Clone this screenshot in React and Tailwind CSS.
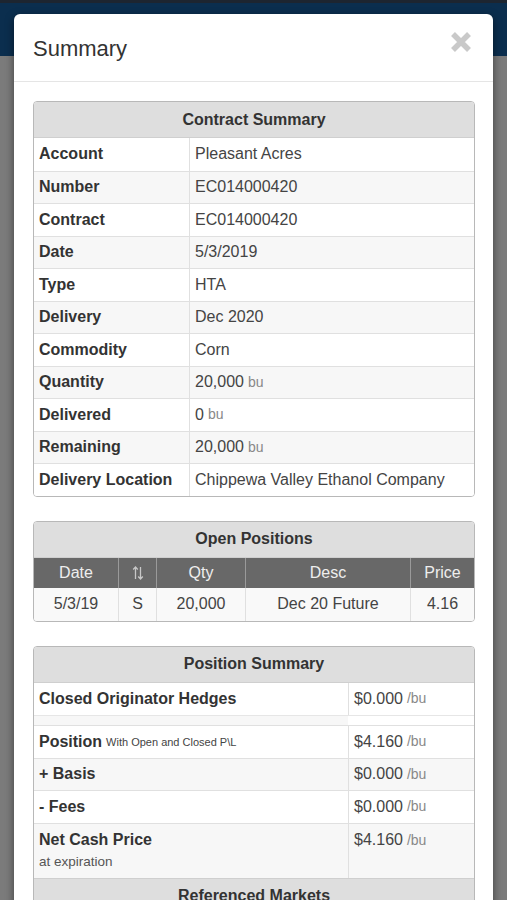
import React from "react";

const contractRows = [
  ["Account", "Pleasant Acres"],
  ["Number", "EC014000420"],
  ["Contract", "EC014000420"],
  ["Date", "5/3/2019"],
  ["Type", "HTA"],
  ["Delivery", "Dec 2020"],
  ["Commodity", "Corn"],
  ["Quantity", "20,000", "bu"],
  ["Delivered", "0", "bu"],
  ["Remaining", "20,000", "bu"],
  ["Delivery Location", "Chippewa Valley Ethanol Company"],
];

function PanelTitle({ children }) {
  return (
    <div className="h-[36px] flex items-center justify-center bg-[#dedede] border-b border-[#cfcfcf] text-[16px] font-bold text-[#333]">
      {children}
    </div>
  );
}

function Unit({ children }) {
  return <span className="text-[14px] text-[#888] ml-[4px]">{children}</span>;
}

function CloseIcon() {
  return (
    <svg width="22" height="22" viewBox="0 0 22 22">
      <path d="M3 3 L19 19 M19 3 L3 19" stroke="#c9c9c9" strokeWidth="5.5" strokeLinecap="butt" />
    </svg>
  );
}

function SortIcon() {
  return (
    <svg width="12" height="16" viewBox="0 0 12 16">
      <path d="M3.5 14 V2 M1.2 4.5 L3.5 2 L5.8 4.5" stroke="#c8c8c8" strokeWidth="1.3" fill="none" />
      <path d="M8.5 2 V14 M6.2 11.5 L8.5 14 L10.8 11.5" stroke="#c8c8c8" strokeWidth="1.3" fill="none" />
    </svg>
  );
}

export default function App() {
  return (
    <div className="relative w-[507px] h-[900px] overflow-hidden bg-[#7b7b7b] font-['Liberation_Sans',Arial,sans-serif] text-[#333]">
      <div className="h-[56px] bg-[#0b2e4e] border-t-[3px] border-[#1d2530]" />

      <div className="absolute left-[14px] top-[14px] w-[479px] h-[920px] bg-white rounded-[6px] shadow-[0_3px_9px_rgba(0,0,0,0.5)]">
        {/* header */}
        <div className="h-[68px] flex items-center justify-between pl-[19px] pr-[21px] border-b border-[#e5e5e5]">
          <div className="text-[22px] text-[#333] pt-[2px]">Summary</div>
          <div className="-mt-[12px]">
            <CloseIcon />
          </div>
        </div>

        <div className="pt-[19px] pl-[19px] pr-[18px] flex flex-col gap-[24px]">
          {/* Contract Summary */}
          <div className="border border-[#b8b8b8] rounded-[4px] overflow-hidden">
            <PanelTitle>Contract Summary</PanelTitle>
            {contractRows.map(([label, value, unit], i) => (
              <div
                key={label}
                className={`flex h-[32.5px] text-[16px] ${i > 0 ? "border-t border-[#e0e0e0]" : ""} ${i % 2 === 1 ? "bg-[#f7f7f7]" : "bg-white"}`}
              >
                <div className="w-[155px] pl-[5px] flex items-center font-bold text-[#333]">{label}</div>
                <div className="flex-1 pl-[5px] flex items-center border-l border-[#e0e0e0] text-[#444]">
                  {value}
                  {unit && <Unit>{unit}</Unit>}
                </div>
              </div>
            ))}
          </div>

          {/* Open Positions */}
          <div className="border border-[#b8b8b8] rounded-[4px] overflow-hidden">
            <PanelTitle>Open Positions</PanelTitle>
            <div className="grid grid-cols-[84px_38px_89px_165px_1fr] h-[30px] bg-[#686868] text-[16px] text-[#eeeeee]">
              <div className="flex items-center justify-center">Date</div>
              <div className="flex items-center justify-center border-l border-[#9a9a9a]"><SortIcon /></div>
              <div className="flex items-center justify-center border-l border-[#9a9a9a]">Qty</div>
              <div className="flex items-center justify-center border-l border-[#9a9a9a]">Desc</div>
              <div className="flex items-center justify-center border-l border-[#9a9a9a]">Price</div>
            </div>
            <div className="grid grid-cols-[84px_38px_89px_165px_1fr] h-[33px] bg-[#f9f9f9] text-[16px] text-[#444]">
              <div className="flex items-center justify-center">5/3/19</div>
              <div className="flex items-center justify-center border-l border-[#e0e0e0]">S</div>
              <div className="flex items-center justify-center border-l border-[#e0e0e0]">20,000</div>
              <div className="flex items-center justify-center border-l border-[#e0e0e0]">Dec 20 Future</div>
              <div className="flex items-center justify-center border-l border-[#e0e0e0]">4.16</div>
            </div>
          </div>

          {/* Position Summary */}
          <div className="border border-[#b8b8b8] rounded-t-[4px] overflow-hidden">
            <PanelTitle>Position Summary</PanelTitle>
            <div className="flex h-[32px] text-[16px] bg-white">
              <div className="w-[314px] pl-[5px] flex items-center font-bold">Closed Originator Hedges</div>
              <div className="flex-1 pl-[5px] flex items-center border-l border-[#e0e0e0] text-[#444]">
                $0.000<Unit>/bu</Unit>
              </div>
            </div>
            <div className="flex h-[10px] border-t border-[#e6e6e6] bg-[#f7f7f7]">
              <div className="w-[314px]" />
              <div className="flex-1 bg-white" />
            </div>
            <div className="flex h-[33px] text-[16px] bg-white border-t border-[#e0e0e0]">
              <div className="w-[314px] pl-[5px] flex items-center">
                <span className="font-bold">Position</span>
                <span className="text-[11px] text-[#444] ml-[4px] mt-[2px]">With Open and Closed P\L</span>
              </div>
              <div className="flex-1 pl-[5px] flex items-center border-l border-[#e0e0e0] text-[#444]">
                $4.160<Unit>/bu</Unit>
              </div>
            </div>
            <div className="flex h-[32.5px] text-[16px] bg-[#f7f7f7] border-t border-[#e0e0e0]">
              <div className="w-[314px] pl-[5px] flex items-center font-bold">+ Basis</div>
              <div className="flex-1 pl-[5px] flex items-center border-l border-[#e0e0e0] text-[#444]">
                $0.000<Unit>/bu</Unit>
              </div>
            </div>
            <div className="flex h-[32.5px] text-[16px] bg-white border-t border-[#e0e0e0]">
              <div className="w-[314px] pl-[5px] flex items-center font-bold">- Fees</div>
              <div className="flex-1 pl-[5px] flex items-center border-l border-[#e0e0e0] text-[#444]">
                $0.000<Unit>/bu</Unit>
              </div>
            </div>
            <div className="flex h-[55px] text-[16px] bg-[#f7f7f7] border-t border-[#e0e0e0]">
              <div className="w-[314px] pl-[5px] pt-[6px] flex flex-col">
                <span className="font-bold leading-[20px]">Net Cash Price</span>
                <span className="text-[13.5px] text-[#555] leading-[16px] mt-[4px]">at expiration</span>
              </div>
              <div className="flex-1 pl-[5px] pt-[6px] border-l border-[#e0e0e0] text-[#444] leading-[20px]">
                $4.160<Unit>/bu</Unit>
              </div>
            </div>
            <div className="h-[36px] flex items-center justify-center bg-[#dedede] border-t border-[#cfcfcf] text-[16px] font-bold text-[#333]">
              Referenced Markets
            </div>
          </div>
        </div>
      </div>
    </div>
  );
}
